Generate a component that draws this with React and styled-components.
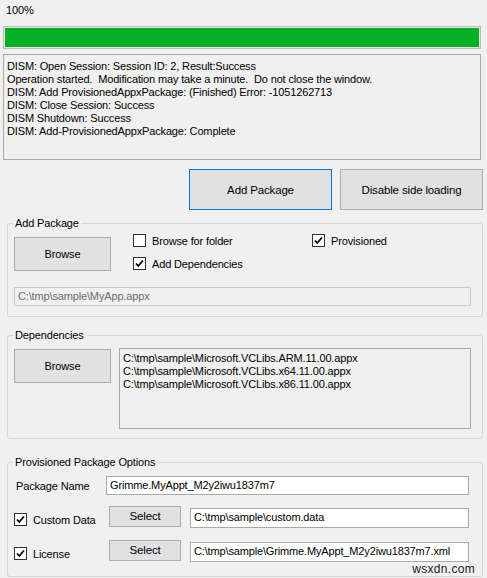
import React from 'react'
import styled, { createGlobalStyle } from 'styled-components'

const GlobalStyle = createGlobalStyle`
  html, body {
    margin: 0;
    padding: 0;
    background: #f0f0f0;
  }
  body {
    font-family: 'Liberation Sans', Arial, sans-serif;
    font-size: 11px;
    letter-spacing: -0.15px;
    color: #000;
  }
`

const logLines = [
  'DISM: Open Session: Session ID: 2, Result:Success',
  'Operation started.  Modification may take a minute.  Do not close the window.',
  'DISM: Add ProvisionedAppxPackage: (Finished) Error: -1051262713',
  'DISM: Close Session: Success',
  'DISM Shutdown: Success',
  'DISM: Add-ProvisionedAppxPackage: Complete',
]

const deps = [
  'C:\\tmp\\sample\\Microsoft.VCLibs.ARM.11.00.appx',
  'C:\\tmp\\sample\\Microsoft.VCLibs.x64.11.00.appx',
  'C:\\tmp\\sample\\Microsoft.VCLibs.x86.11.00.appx',
]

const CheckBox = ({ checked, children }) => (
  <CheckLabel>
    <Box>
      {checked && (
        <svg width="11" height="11" viewBox="0 0 11 11">
          <path d="M2 5.5 L4.3 8 L9 2.5" fill="none" stroke="#000" strokeWidth="1.8" />
        </svg>
      )}
    </Box>
    {children}
  </CheckLabel>
)

const App = () => {
  return (
    <Page>
      <GlobalStyle />
      <Percent>100%</Percent>
      <Progress>
        <Fill style={{ width: '100%' }} />
      </Progress>
      <LogBox>
        {logLines.map((l) => (
          <div key={l}>{l}</div>
        ))}
      </LogBox>

      <ActionRow>
        <BigButton focused>Add Package</BigButton>
        <BigButton>Disable side loading</BigButton>
      </ActionRow>

      <Group top={6} bottom={10}>
        <legend>Add Package</legend>
        <PackageRow>
          <BrowseButton>Browse</BrowseButton>
          <CheckGrid>
            <CheckBox>Browse for folder</CheckBox>
            <CheckBox checked>Provisioned</CheckBox>
            <CheckBox checked>Add Dependencies</CheckBox>
          </CheckGrid>
        </PackageRow>
        <PathBox>C:\tmp\sample\MyApp.appx</PathBox>
      </Group>

      <Group top={11} bottom={9}>
        <legend>Dependencies</legend>
        <DepRow>
          <BrowseButton>Browse</BrowseButton>
          <DepList>
            {deps.map((d) => (
              <div key={d}>{d}</div>
            ))}
          </DepList>
        </DepRow>
      </Group>

      <Group top={16} bottom={14} right={13}>
        <legend>Provisioned Package Options</legend>
        <OptRow>
          <NameLabel>Package Name</NameLabel>
          <TextBox>Grimme.MyAppt_M2y2iwu1837m7</TextBox>
        </OptRow>
        <OptRow gap={11}>
          <OptCheck>
            <CheckBox checked>Custom Data</CheckBox>
          </OptCheck>
          <SelectButton>Select</SelectButton>
          <TextBox low>C:\tmp\sample\custom.data</TextBox>
        </OptRow>
        <OptRow gap={12}>
          <OptCheck>
            <CheckBox checked>License</CheckBox>
          </OptCheck>
          <SelectButton>Select</SelectButton>
          <TextBox low>C:\tmp\sample\Grimme.MyAppt_M2y2iwu1837m7.xml</TextBox>
        </OptRow>
      </Group>

      <Watermark>wsxdn.com</Watermark>
    </Page>
  )
}

const Page = styled.div`
  position: relative;
  width: 487px;
  height: 578px;
  overflow: hidden;
  background: #f0f0f0;
  box-sizing: border-box;
  padding-top: 4px;
`

const Percent = styled.div`
  padding-left: 6px;
  line-height: 12px;
  height: 12px;
`

const Progress = styled.div`
  margin: 10px 6px 0 3px;
  height: 23px;
  border: 1px solid #bcbcbc;
  background: #e6e6e6;
  box-sizing: border-box;
  padding: 1px;
`

const Fill = styled.div`
  height: 100%;
  background: #06b025;
`

const LogBox = styled.div`
  margin: 5px 6px 0 3px;
  height: 106px;
  border: 1px solid #a9a9a9;
  box-sizing: border-box;
  padding: 5px 3px 0;
  line-height: 13px;
  white-space: pre;
  overflow: hidden;
`

const ActionRow = styled.div`
  display: flex;
  justify-content: flex-end;
  gap: 8px;
  margin: 9px 4px 0 0;
`

const BigButton = styled.button`
  width: 143px;
  height: 41px;
  font: inherit;
  letter-spacing: inherit;
  font-size: 11.5px;
  color: #000;
  background: #e1e1e1;
  border: 1px solid ${(p) => (p.focused ? '#0078d7' : '#adadad')};
  padding: 0;
`

const Group = styled.fieldset`
  margin: ${(p) => p.top}px 4px 0 7px;
  padding: 7px ${(p) => p.right || 11}px ${(p) => p.bottom}px 6px;
  border: 1px solid #d5d5d5;
  border-radius: 3px;
  min-width: 0;
  legend {
    padding: 0 2px;
    margin-left: -1px;
    line-height: 14px;
    height: 14px;
  }
`

const PackageRow = styled.div`
  display: flex;
  align-items: flex-start;
  gap: 22px;
`

const BrowseButton = styled.button`
  flex: none;
  width: 97px;
  height: 34px;
  font: inherit;
  letter-spacing: inherit;
  color: #000;
  background: #e1e1e1;
  border: 1px solid #adadad;
  padding: 0;
`

const CheckGrid = styled.div`
  display: grid;
  grid-template-columns: 179px auto;
  grid-auto-rows: 23px;
  margin-top: -8px;
`

const CheckLabel = styled.label`
  display: flex;
  align-items: center;
  gap: 6px;
  white-space: nowrap;
`

const Box = styled.span`
  flex: none;
  display: flex;
  align-items: center;
  justify-content: center;
  width: 13px;
  height: 13px;
  box-sizing: border-box;
  border: 1px solid #333;
  background: #fff;
`

const PathBox = styled.div`
  margin-top: 12px;
  height: 19px;
  box-sizing: border-box;
  border: 1px solid #cccccc;
  color: #6d6d6d;
  line-height: 17px;
  padding-left: 3px;
`

const DepRow = styled.div`
  display: flex;
  align-items: flex-start;
  gap: 8px;
`

const DepList = styled.div`
  flex: 1;
  margin-top: -1px;
  height: 81px;
  box-sizing: border-box;
  border: 1px solid #a9a9a9;
  padding: 3px 3px;
  line-height: 13px;
`

const OptRow = styled.div`
  display: flex;
  align-items: center;
  height: ${(p) => (p.gap ? 22 : 19)}px;
  margin-top: ${(p) => p.gap || 0}px;
`

const NameLabel = styled.div`
  width: 90px;
  padding-left: 2px;
  flex: none;
`

const OptCheck = styled.div`
  width: 95px;
  flex: none;
  align-self: flex-end;
  margin-bottom: 2px;
`

const SelectButton = styled.button`
  flex: none;
  align-self: flex-start;
  width: 72px;
  height: 21px;
  font: inherit;
  letter-spacing: inherit;
  font-size: 11.5px;
  color: #000;
  background: #e1e1e1;
  border: 1px solid #adadad;
  padding: 0 0 2px;
  margin-right: 9px;
`

const TextBox = styled.div`
  flex: 1;
  height: ${(p) => (p.low ? 20 : 19)}px;
  align-self: ${(p) => (p.low ? 'flex-end' : 'center')};
  box-sizing: border-box;
  border: 1px solid #a9a9a9;
  background: #fff;
  line-height: 17px;
  padding-left: 3px;
  white-space: nowrap;
  overflow: hidden;
`

const Watermark = styled.div`
  position: absolute;
  right: 12px;
  bottom: 2px;
  font-size: 12px;
  line-height: 13px;
  color: #1a1a1a;
  letter-spacing: 0.3px;
`

export default App
